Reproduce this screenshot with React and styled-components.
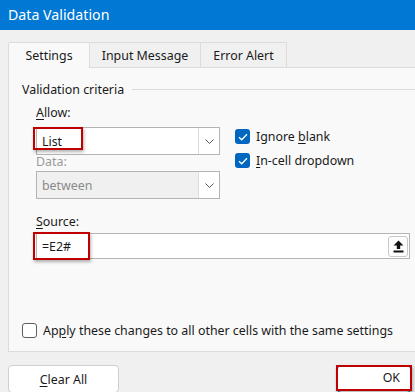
import React from 'react';
import styled, { createGlobalStyle } from 'styled-components';

const GlobalStyle = createGlobalStyle`
  body {
    margin: 0;
    background: #f0f0f0;
    font-family: "Noto Sans", "Open Sans", sans-serif;
    font-size: 12.4px;
    color: #1a1a1a;
    overflow: hidden;
  }
`

const Window = styled.div`
  width: 415px;
  height: 392px;
  overflow: hidden;
`
const TitleBar = styled.div`
  height: 30px;
  background: #0078d4;
  color: #fff;
  font-size: 14.2px;
  line-height: 29px;
  padding-left: 8px;
`
const Body = styled.div`
  padding: 11px 0 0 8px;
`
const Tabs = styled.div`
  display: flex;
  align-items: flex-end;
  height: 26px;
`
const Tab = styled.div`
  width: ${p => p.w}px;
  height: ${p => (p.active ? '26px' : '25px')};
  display: flex;
  align-items: center;
  justify-content: center;
  box-sizing: border-box;
  border: 1px solid #dcdcdc;
  border-bottom: none;
  border-left: ${p => (p.first ? '1px solid #dcdcdc' : 'none')};
  border-radius: ${p => (p.active ? '2px 2px 0 0' : '0')};
  background: ${p => (p.active ? '#f9f9f9' : '#f0f0f0')};
  position: relative;
  z-index: ${p => (p.active ? 2 : 1)};
  margin-bottom: ${p => (p.active ? '-1px' : '0')};
`
const Panel = styled.div`
  height: 285px;
  box-sizing: border-box;
  border: 1px solid #dcdcdc;
  border-right: none;
  background: #f9f9f9;
  padding: 12px 0 0 13px;
  display: flex;
  flex-direction: column;
`
const Legend = styled.div`
  display: flex;
  align-items: center;
  gap: 8px;
  height: 18px;
  &::after {
    content: '';
    flex: 1;
    height: 1px;
    background: #dcdcdc;
  }
`
const Group = styled.div`
  padding-left: 14px;
  display: flex;
  flex-direction: column;
`
const Label = styled.div`
  height: 18px;
  line-height: 18px;
  color: ${p => (p.disabled ? '#9a9a9a' : '#1a1a1a')};
  margin-top: ${p => p.top}px;
`
const U = styled.span`
  text-decoration: underline;
  text-underline-offset: 2px;
`
const Row = styled.div`
  display: flex;
  align-items: flex-start;
  height: ${p => p.h}px;
  margin-top: ${p => p.top || 0}px;
`
const Combo = styled.div`
  width: 184px;
  height: 28px;
  box-sizing: border-box;
  border: 1px solid #b4b4b4;
  background: ${p => (p.disabled ? '#f0f0f0' : '#fff')};
  color: ${p => (p.disabled ? '#8a8a8a' : '#1a1a1a')};
  display: flex;
  align-items: stretch;
  flex-shrink: 0;
`
const ComboText = styled.div`
  flex: 1;
  display: flex;
  align-items: center;
  padding-left: 5px;
  position: relative;
`
const ComboButton = styled.div`
  width: 20px;
  border-left: 1px solid #dcdcdc;
  background: #fff;
  display: flex;
  align-items: center;
  justify-content: center;
`
const Marker = styled.div`
  position: absolute;
  border: 2px solid #c00000;
  box-shadow: 1px 2px 3px rgba(0, 0, 0, 0.3);
  left: ${p => p.l}px;
  top: ${p => p.t}px;
  width: ${p => p.w}px;
  height: ${p => p.h}px;
  box-sizing: border-box;
  pointer-events: none;
`
const Checks = styled.div`
  display: flex;
  flex-direction: column;
  gap: 9px;
  margin: 2px 0 0 15px;
`
const CheckRow = styled.div`
  display: flex;
  align-items: center;
  gap: 6px;
  height: 15px;
`
const Box = styled.div`
  width: 15px;
  height: 15px;
  flex-shrink: 0;
  box-sizing: border-box;
  border-radius: 3px;
  background: ${p => (p.checked ? '#0067c0' : '#fff')};
  border: ${p => (p.checked ? 'none' : '1px solid #5f5f5f')};
  display: flex;
  align-items: center;
  justify-content: center;
`
const SourceInput = styled.div`
  width: 374px;
  height: 26px;
  box-sizing: border-box;
  border: 1px solid #b4b4b4;
  background: #fff;
  display: flex;
  align-items: center;
  padding-left: 5px;
  position: relative;
`
const InputText = styled.div`
  flex: 1;
`
const PickButton = styled.div`
  width: 20px;
  height: 21px;
  box-sizing: border-box;
  border: 1px solid #c8c8c8;
  border-radius: 3px;
  margin-right: 1px;
  display: flex;
  align-items: center;
  justify-content: center;
  background: #fdfdfd;
`
const ApplyRow = styled(CheckRow)`
  margin-top: auto;
  margin-bottom: 13px;
`
const Footer = styled.div`
  display: flex;
  justify-content: space-between;
  margin-top: 13px;
  padding-right: 4px;
`
const Button = styled.div`
  width: ${p => p.w}px;
  height: 28px;
  box-sizing: border-box;
  border: 1px solid ${p => (p.primary ? '#0067c0' : '#cfcfcf')};
  border-radius: 4px;
  background: #fff;
  display: flex;
  align-items: center;
  justify-content: center;
  position: relative;
`
const OkLabel = styled.span`
  position: absolute;
  right: 10px;
  top: 3px;
`

const Check = () => (
  <svg width="10" height="8" viewBox="0 0 10 8">
    <path d="M1 4.2 L3.7 6.8 L9 1.2" fill="none" stroke="#fff" strokeWidth="1.3" />
  </svg>
)

const Chevron = () => (
  <svg width="9" height="5" viewBox="0 0 9 5">
    <path d="M0.5 0.5 L4.5 4.5 L8.5 0.5" fill="none" stroke="#555" strokeWidth="1" />
  </svg>
)

const UploadIcon = () => (
  <svg width="11" height="13" viewBox="0 0 11 13">
    <path d="M5.5 0.5 L10.5 5.5 L7.2 5.5 L7.2 9 L3.8 9 L3.8 5.5 L0.5 5.5 Z" fill="#111" />
    <rect x="0.5" y="10.5" width="10" height="2" fill="#111" />
  </svg>
)

export default function App() {
  return (
    <Window>
      <GlobalStyle />
      <TitleBar>Data Validation</TitleBar>
      <Body>
        <Tabs>
          <Tab active first w={82}>Settings</Tab>
          <Tab w={111}>Input Message</Tab>
          <Tab w={86}>Error Alert</Tab>
        </Tabs>
        <Panel>
          <Legend>Validation criteria</Legend>
          <Group>
            <Label top={6}><U>A</U>llow:</Label>
            <Row top={5} h={28}>
              <Combo>
                <ComboText>
                  List
                  <Marker l={-4} t={-1} w={50} h={23} />
                </ComboText>
                <ComboButton><Chevron /></ComboButton>
              </Combo>
              <Checks>
                <CheckRow>
                  <Box checked><Check /></Box>
                  <span>Ignore <U>b</U>lank</span>
                </CheckRow>
                <CheckRow>
                  <Box checked><Check /></Box>
                  <span><U>I</U>n-cell dropdown</span>
                </CheckRow>
              </Checks>
            </Row>
            <Label disabled top={-2}>Data:</Label>
            <Row h={28}>
              <Combo disabled>
                <ComboText>between</ComboText>
                <ComboButton><Chevron /></ComboButton>
              </Combo>
            </Row>
            <Label top={14}><U>S</U>ource:</Label>
            <Row top={2} h={26}>
              <SourceInput>
                <InputText>=E2#</InputText>
                <PickButton><UploadIcon /></PickButton>
                <Marker l={-4} t={-2} w={57} h={28} />
              </SourceInput>
            </Row>
          </Group>
          <ApplyRow>
            <Box />
            <span>Ap<U>p</U>ly these changes to all other cells with the same settings</span>
          </ApplyRow>
        </Panel>
        <Footer>
          <Button w={111}><span><U>C</U>lear All</span></Button>
          <Button primary w={74}>
            <OkLabel>OK</OkLabel>
            <Marker l={-2} t={-1} w={76} h={26} />
          </Button>
        </Footer>
      </Body>
    </Window>
  );
}
